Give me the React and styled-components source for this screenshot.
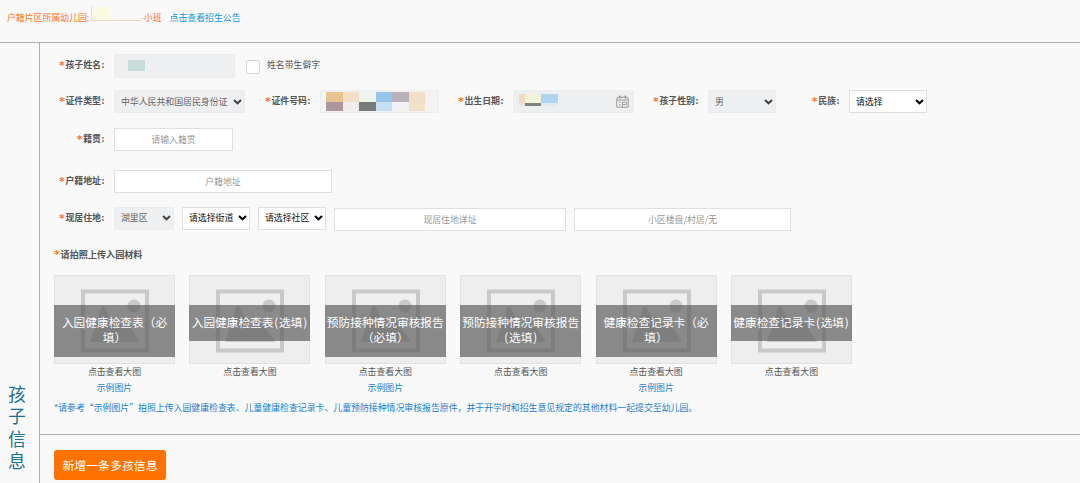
import React from "react";
import styled, { createGlobalStyle } from "styled-components";

const Global = createGlobalStyle`
  * { box-sizing: border-box; }
  body {
    margin: 0;
    background: #f9f9f9;
    font-family: "Noto Sans CJK SC", "Liberation Sans", sans-serif;
    font-size: 8.9px;
    line-height: 14px;
    color: #555;
    overflow: hidden;
  }
`;

const Page = styled.div`
  display: flex;
  flex-direction: column;
  width: 1080px;
  height: 483px;
  overflow: hidden;
`;

const Header = styled.header`
  display: flex;
  height: 43px;
  padding: 11px 0 0 7px;
  border-bottom: 1px solid #adadad;
  color: #ff7416;
  white-space: nowrap;
`;

const MaskedName = styled.span`
  width: 50px;
  height: 14px;
  margin: -4px 0 0 2px;
  border: solid #fbd5b8;
  border-width: 0 0 1px 1px;
  &::before {
    content: "";
    display: block;
    width: 17px;
    height: 12px;
    background: #fafae0;
  }
`;

const Dot = styled.span`
  width: 2.5px;
  font-family: "Liberation Sans", sans-serif;
`;

const NoticeLink = styled.a`
  margin-left: 8px;
  color: #1296db;
`;

const Body = styled.div`
  display: flex;
  flex: 1;
  min-height: 0;
`;

const Side = styled.aside`
  width: 40px;
  border-right: 1px solid #adadad;
  padding: 339px 0 0 8px;
  font-size: 17.8px;
  line-height: 22.3px;
  color: #1d6f93;
`;

const SideTitle = styled.div`
  width: 18px;
`;

const Main = styled.main`
  flex: 1;
`;

const Form = styled.section`
  height: 392px;
  padding: 11px 0 0 14px;
  border-bottom: 1px solid #adadad;
`;

const Row = styled.div`
  display: flex;
  height: 24px;
  margin-bottom: ${(p) => p.$after}px;
`;

const Field = styled.div`
  display: flex;
  margin-left: ${(p) => p.$before || 0}px;
`;

const LabelText = styled.label`
  display: flex;
  justify-content: flex-end;
  width: 52px;
  margin-right: 8px;
  padding-top: 4px;
  font-weight: 700;
  white-space: nowrap;
`;

const Star = styled.span`
  width: 6.6px;
  color: #ff7416;
  font-family: "DejaVu Sans", sans-serif;
  font-size: 11px;
  font-weight: 700;
  line-height: 16px;
`;

const Colon = styled.span`
  width: 5px;
  padding-left: 0.5px;
`;

const Control = styled.div`
  display: flex;
  align-items: center;
  width: ${(p) => p.$w}px;
  height: 23px;
  border: 1px solid ${(p) => (p.$off ? "#ececec" : "#dfdfdf")};
  background: ${(p) => (p.$off ? "#eeeff0" : "#fff")};
  white-space: nowrap;
`;

const TextInput = styled(Control)`
  justify-content: center;
  margin: ${(p) => p.$margin || 0};
  color: #999;
`;

const SelectBox = styled(Control)`
  justify-content: space-between;
  padding: 0 1px 0 6px;
  margin-right: ${(p) => p.$after || 0}px;
  color: ${(p) => (p.$off ? "#666" : "#111")};
`;

const MaskedInput = styled(Control)`
  justify-content: space-between;
  height: ${(p) => p.$h || 23}px;
  padding: 0 4px 0 ${(p) => p.$pad}px;
  background: ${(p) => p.$bg || "#eeeff0"};
`;

const Mosaic = styled.div`
  display: grid;
  margin-top: ${(p) => p.$shift || 0}px;
  grid-template-columns: ${(p) => p.$cols};
  grid-template-rows: ${(p) => p.$rows};
`;

const Tile = styled.i`
  background: ${(p) => p.$c};
`;

const CheckBox = styled.span`
  width: 14px;
  height: 14px;
  margin: 6px 7px 0 11px;
  border: 1px solid #d8d8d8;
  border-radius: 2px;
  background: #fff;
`;

const CheckLabel = styled.span`
  padding-top: 4px;
`;

const SectionLabel = styled.div`
  display: flex;
  height: 14px;
  font-size: 9.1px;
  font-weight: 700;
`;

const Cards = styled.div`
  display: flex;
  gap: 14.4px;
  height: 125px;
  margin-top: 14px;
`;

const Card = styled.figure`
  display: flex;
  flex-direction: column;
  align-items: center;
  width: 121px;
  margin: 0;
`;

const Thumb = styled.div`
  position: relative;
  width: 121px;
  height: 89px;
  border: 1px solid #e2e2e2;
  background: #eee;
  svg { display: block; }
`;

const Overlay = styled.div`
  position: absolute;
  left: -1px;
  top: 29.5px;
  width: 121px;
  height: ${(p) => (p.$tall ? 52 : 35.5)}px;
  padding-top: 8.5px;
  background: rgba(90, 90, 90, 0.68);
  color: #fff;
  font-size: 11.7px;
  font-weight: 400;
  line-height: 15.6px;
  text-align: center;
  white-space: pre;
`;

const Paren = styled.span`
  padding: 0 0.8px;
`;

const Caption = styled.figcaption`
  height: 16.5px;
  line-height: 15px;
`;

const SampleLink = styled.a`
  color: #1b7fd0;
  line-height: 16px;
`;

const Note = styled.p`
  margin: 1px 0 0;
  color: #1b7fd0;
  white-space: nowrap;
`;

const Footer = styled.footer`
  padding: 15px 0 0 14px;
`;

const AddButton = styled.button`
  display: block;
  width: 112px;
  height: 30px;
  padding: 0;
  border: 0;
  border-radius: 3px;
  background: #ff7200;
  color: #fff;
  font: 400 11.9px/30px "Noto Sans CJK SC", sans-serif;
`;

const Chevron = ({ color }) => (
  <svg width="11" height="8" viewBox="0 0 11 8" fill="none" stroke={color} strokeWidth="2">
    <path d="M2 2 L5.5 5.3 L9 2" />
  </svg>
);

const Calendar = () => (
  <svg width="13" height="13" viewBox="0 0 13 13" fill="none" stroke="#999">
    <path d="M2.5 2.2H10.5Q12.2 2.2 12.2 4V12.2H0.8V4Q0.8 2.2 2.5 2.2Z" />
    <path d="M1 5H12" />
    <path d="M3.7 0.5V3.5M9.3 0.5V3.5" strokeWidth="1.6" />
    <path d="M3 7.3H5M3 9.8H5M6.5 7.3V12M6.5 7.3H10.5V9.5H6.5" strokeWidth="0.9" />
  </svg>
);

const Placeholder = () => (
  <svg width="119" height="87" viewBox="0 0 119 87">
    <rect x="28" y="15.5" width="64" height="59" fill="#efefef" stroke="#c9c9c9" strokeWidth="4" />
    <circle cx="79" cy="30" r="6.5" fill="#c9c9c9" />
    <path d="M35 66 L46 32 Q48 27 50 32 L60 53 L70 43 L85 66Z" fill="#c9c9c9" />
  </svg>
);

const Label = ({ children }) => (
  <LabelText>
    <Star>*</Star>
    {children}
    <Colon>:</Colon>
  </LabelText>
);

const Select = ({ w, off, after, children }) => (
  <SelectBox $w={w} $off={off} $after={after}>
    {children}
    <Chevron color={off ? "#444" : "#000"} />
  </SelectBox>
);

const idTiles = [
  "#e9c492", "#f1dfc8", "#edf3ed", "#98c3ea", "#b9b0b8", "#f1dfc8",
  "#ad969c", "#f1ecec", "#797b7b", "#c7dff2", "#f2f1f3", "#f1dfc8",
];
const dateTiles = ["#f0dcc0", "#f1f1dc", "#add5ef", "#e9e4df", "#808080", "#e3eaee"];

const materials = [
  { text: "入园健康检查表（必\n填）", tall: true, sample: true },
  { text: "入园健康检查表", optional: true },
  { text: "预防接种情况审核报告\n（必填）", tall: true, sample: true },
  { text: "预防接种情况审核报告\n", tall: true, optional: true },
  { text: "健康检查记录卡（必\n填）", tall: true, sample: true },
  { text: "健康检查记录卡", optional: true },
];

export default function App() {
  return (
    <Page>
      <Global />
      <Header>
        户籍片区所属幼儿园:
        <MaskedName />
        <Dot>·</Dot>
        小班
        <NoticeLink>点击查看招生公告</NoticeLink>
      </Header>
      <Body>
        <Side>
          <SideTitle>孩子信息</SideTitle>
        </Side>
        <Main>
          <Form>
            <Row $after={12}>
              <Label>孩子姓名</Label>
              <MaskedInput $w={121} $h={24} $pad={13} $off>
                <Mosaic $cols="17px" $rows="11px" $shift={-2}>
                  <Tile $c="#c8ddd8" />
                </Mosaic>
              </MaskedInput>
              <CheckBox />
              <CheckLabel>姓名带生僻字</CheckLabel>
            </Row>
            <Row $after={14}>
              <Field>
                <Label>证件类型</Label>
                <Select w={131} off>中华人民共和国居民身份证</Select>
              </Field>
              <Field $before={15}>
                <Label>证件号码</Label>
                <MaskedInput $w={119} $pad={5} $bg="#f3f3f4" $off>
                  <Mosaic $cols="17px 16px 17px 16px 17px 16px" $rows="10px 9px">
                    {idTiles.map((c, i) => <Tile key={i} $c={c} />)}
                  </Mosaic>
                </MaskedInput>
              </Field>
              <Field $before={14}>
                <Label>出生日期</Label>
                <MaskedInput $w={121} $pad={5} $off>
                  <Mosaic $cols="6px 16px 17px" $rows="9px 3px" $shift={-3}>
                    {dateTiles.map((c, i) => <Tile key={i} $c={c} />)}
                  </Mosaic>
                  <Calendar />
                </MaskedInput>
              </Field>
              <Field $before={14}>
                <Label>孩子性别</Label>
                <Select w={68} off>男</Select>
              </Field>
              <Field $before={13}>
                <Label>民族</Label>
                <Select w={78}>请选择</Select>
              </Field>
            </Row>
            <Row $after={18}>
              <Label>籍贯</Label>
              <TextInput $w={119}>请输入籍贯</TextInput>
            </Row>
            <Row $after={12.5}>
              <Label>户籍地址</Label>
              <TextInput $w={218}>户籍地址</TextInput>
            </Row>
            <Row $after={16}>
              <Label>现居住地</Label>
              <Select w={60} after={8} off>湖里区</Select>
              <Select w={68} after={8}>请选择街道</Select>
              <Select w={68} after={8}>请选择社区</Select>
              <TextInput $w={232} $margin="1.5px 8px 0 0">现居住地详址</TextInput>
              <TextInput $w={217} $margin="1.5px 0 0">小区楼盘/村居/无</TextInput>
            </Row>
            <SectionLabel>
              <Star>*</Star>
              请拍照上传入园材料
            </SectionLabel>
            <Cards>
              {materials.map((m) => (
                <Card key={m.text}>
                  <Thumb>
                    <Placeholder />
                    <Overlay $tall={m.tall}>
                      {m.text}
                      {m.optional && <><Paren>(</Paren>选填<Paren>)</Paren></>}
                    </Overlay>
                  </Thumb>
                  <Caption>点击查看大图</Caption>
                  {m.sample && <SampleLink>示例图片</SampleLink>}
                </Card>
              ))}
            </Cards>
            <Note>
              *请参考“示例图片”拍照上传入园健康检查表、儿童健康检查记录卡、儿童预防接种情况审核报告原件，并于开学时和招生意见规定的其他材料一起提交至幼儿园。
            </Note>
          </Form>
          <Footer>
            <AddButton>新增一条多孩信息</AddButton>
          </Footer>
        </Main>
      </Body>
    </Page>
  );
}
